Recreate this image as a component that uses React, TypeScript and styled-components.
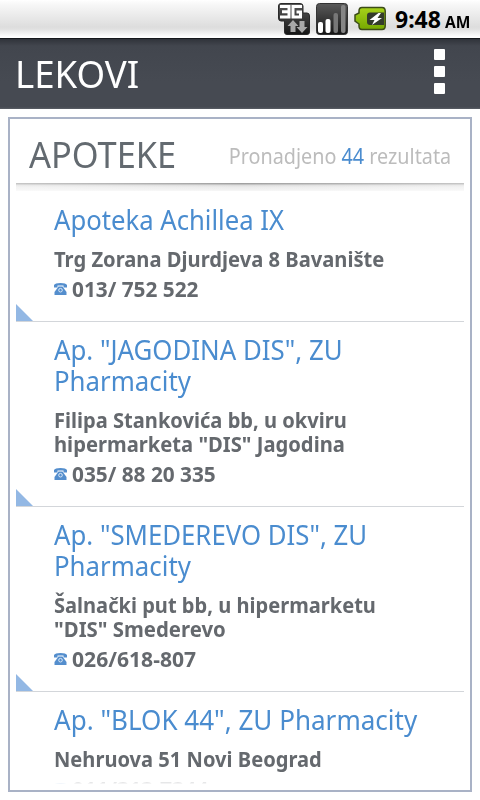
import React from "react";
import styled, { createGlobalStyle } from "styled-components";

const Global = createGlobalStyle`
  * { box-sizing: border-box; }
  body { margin: 0; background: #fff; font-family: "Noto Sans", sans-serif; }
`;
const Screen = styled.div`
  width: 480px; height: 800px; overflow: hidden;
  display: flex; flex-direction: column; background: #fff;
`;
const StatusBar = styled.div`
  height: 39px; flex: none; display: flex; align-items: flex-start; justify-content: flex-end;
  gap: 6px; padding: 3px 10px 0 0;
  background: linear-gradient(#ffffff 0, #f8f8f8 4px, #dddddd 27px, #e0e0e0 29px, #fbfbfb 36px, #ffffff 37px);
  border-bottom: 1px solid #15171b;
  svg { flex: none; display: block; }
`;
const Clock = styled.div`
  display: flex; align-items: baseline; gap: 4px; width: 75px; margin-left: 3px;
  font-weight: 700; color: #000; white-space: nowrap; line-height: 33px;
`;
const Header = styled.header`
  height: 70px; flex: none; display: flex; align-items: center; justify-content: space-between;
  padding: 0 35px 2px 15px; color: #fff;
  background: linear-gradient(#30333a 0, #42464e 7px, #464a52 60%, #464a52 68px, #5b5f66 70px);
`;
const MenuButton = styled.button`
  border: 0; padding: 0; background: none; display: flex; flex-direction: column; gap: 6px;
  margin-bottom: 4px;
`;
const Dot = styled.span`width: 11px; height: 11px; background: #fff; border-radius: 1px;`;
const Panel = styled.main`
  height: 675px; flex: none; margin: 8px 8px 0; padding: 0 6px 6px;
  border: 2px solid #a9b2c6; display: flex; flex-direction: column;
`;
const PanelHead = styled.div`
  height: 64px; flex: none; display: flex; justify-content: space-between; align-items: flex-start;
  padding: 0 13px;
`;
const Divider = styled.div`
  height: 8px; flex: none;
  background: linear-gradient(90deg, rgba(255,255,255,.4), transparent 50%, rgba(255,255,255,.4)),
    linear-gradient(#999 0, #a8a8a8 1px, #dadada 2px, #ebebeb 4px, #f2f2f2 7px, #f8f8f8 8px);
`;
const List = styled.div`
  flex: 1; min-height: 0; overflow: hidden; padding-top: 1px;
  mask-image: linear-gradient(#000 calc(100% - 9px), rgba(0,0,0,.16) calc(100% - 6px), rgba(0,0,0,.16) calc(100% - 1px), transparent 100%);
`;
const Card = styled.article`
  position: relative; padding: 12px 0 20px 38px; border-bottom: 1px solid #d3d6da;
`;
const Corner = styled.i`
  position: absolute; left: 0; bottom: 0; width: 17px; height: 17px;
  background: #93b8e4; clip-path: polygon(0 0, 100% 100%, 0 100%);
`;
const Name = styled.h2`margin: 0; font-size: 28px; font-weight: 400; line-height: 31px; color: #4a8ccf;`;
const Address = styled.p`margin: 12px 0 0; font-size: 21px; font-weight: 700; line-height: 24px; color: #65696e;`;
const Phone = styled.div`
  display: flex; align-items: center; gap: 5px; margin-top: 6px; height: 24px;
  font-size: 21px; font-weight: 700; line-height: 24px; color: #65696e;
  svg { flex: none; }
`;
// Condensed line of text: keeps the glyph height while narrowing the advance.
const Line = styled.span<{ $x?: number; $size?: number; $color?: string; $block?: boolean; $right?: boolean; $lh?: number }>`
  display: ${p => (p.$block ? "block" : "inline-block")};
  white-space: nowrap;
  transform: scaleX(${p => p.$x ?? 1});
  transform-origin: ${p => (p.$right ? "right" : "left")} center;
  ${p => p.$size ? `font-size: ${p.$size}px;` : ""}
  ${p => p.$color ? `color: ${p.$color};` : ""}
  ${p => p.$lh ? `line-height: ${p.$lh}px;` : ""}
`;
const Count = styled.span`color: #4a8ccf;`;

const Network = () => (
  <svg width="32" height="32" viewBox="0 0 32 32">
    <defs><linearGradient id="dark" x2="0" y2="1"><stop stopColor="#5a5a5a" /><stop offset="1" stopColor="#151515" /></linearGradient></defs>
    <path d="M3 .5H22Q25 .5 25 3V10H29Q31.500 10 31.500 13V29Q31.500 31.500 29 31.500H9Q6.500 31.500 6.500 29V18H3Q.5 18 .5 15V3Q.5 .5 3 .5Z" fill="url(#dark)" stroke="#2a2a2a" />
    <path d="M2 3.500H11V14H2M4 8.700H11M24 3.500H15V14H22.500V9H18.500" fill="none" stroke="#fff" strokeWidth="3" />
    <path d="M15 17L20.500 23H17.500V29H12.500V23H9.500ZM24 30L18.500 24H21.500V18H26.500V24H29.500Z" fill="#a8a8a8" />
  </svg>
);
const Signal = () => (
  <svg width="32" height="32" viewBox="0 0 32 32">
    <rect x=".5" y=".5" width="31" height="31" rx="3" fill="url(#dark)" stroke="#333" />
    <rect x="2" y="19" width="5" height="11" rx="2" fill="#fff" />
    <rect x="9.500" y="16" width="5" height="14" rx="2" fill="#fff" />
    <rect x="17.500" y="10" width="4.500" height="20" rx="2" fill="#777" />
    <rect x="25" y="2" width="4.500" height="28" rx="2" fill="#858585" />
  </svg>
);
const Battery = () => (
  <svg width="32" height="32" viewBox="0 0 32 32">
    <defs><linearGradient id="green" x2="0" y2="1"><stop stopColor="#a7d21b" /><stop offset="1" stopColor="#76a900" /></linearGradient></defs>
    <path d="M8 4.500H28Q31.200 4.500 31.200 8V23Q31.200 26.500 28 26.500H8Q5 26.500 5 23V21L1 18V12L5 10V8Q5 4.500 8 4.500Z" fill="url(#green)" stroke="#3c4c18" strokeWidth="1.500" />
    <path d="M16 9.500H30V22H16Q13 22 13 19V12.500Q13 9.500 16 9.500Z" fill="#343b2b" />
    <path d="M24.500 10L15.500 17H20.500L18 22L28 15H23.500L27 10Z" fill="#fff" />
  </svg>
);
const PhoneIcon = () => (
  <svg width="13" height="12" viewBox="0 0 13 12">
    <path d="M0 4.500V2Q1 0 6.500 0T13 2V4.500H9.500V2.500H3.500V4.500Z" fill="#548ecd" />
    <path d="M4.500 3.500H8.500L12.500 9V12H.5V9Z" fill="#548ecd" />
    <circle cx="6.500" cy="7.200" r="1.800" fill="none" stroke="#dce9f7" />
  </svg>
);

type Text = [string, number];
const pharmacies: { name: Text[]; address: Text[]; phone: Text }[] = [
  { name: [["Apoteka Achillea IX", .917]], address: [["Trg Zorana Djurdjeva 8 Bavanište", .96]], phone: ["013/ 752 522", .99] },
  { name: [["Ap. \"JAGODINA DIS\", ZU", .922], ["Pharmacity", .922]], address: [["Filipa Stankovića bb, u okviru", .957], ["hipermarketa \"DIS\" Jagodina", .961]], phone: ["035/ 88 20 335", .99] },
  { name: [["Ap. \"SMEDEREVO DIS\", ZU", .92], ["Pharmacity", .922]], address: [["Šalnački put bb, u hipermarketu", .956], ["\"DIS\" Smederevo", .969]], phone: ["026/618-807", 1.005] },
  { name: [["Ap. \"BLOK 44\", ZU Pharmacity", .93]], address: [["Nehruova 51 Novi Beograd", .957]], phone: ["011/313-7344", 1.005] },
];
const lines = (ls: Text[]) => ls.map(([t, x]) => <Line key={t} $block $x={x}>{t}</Line>);

export default function App() {
  return (
    <Screen>
      <Global />
      <StatusBar>
        <Network /><Signal /><Battery />
        <Clock><Line $size={23} $x={1}>9:48</Line><Line $size={16} $x={.97}>AM</Line></Clock>
      </StatusBar>
      <Header>
        <Line $size={38} $x={.965}>LEKOVI</Line>
        <MenuButton aria-label="Meni"><Dot /><Dot /><Dot /></MenuButton>
      </Header>
      <Panel>
        <PanelHead>
          <Line $size={36} $x={.955} $lh={72} $color="#636a70">APOTEKE</Line>
          <Line $size={21} $x={.942} $lh={75} $color="#bcbcbc" $right>Pronadjeno <Count>44</Count> rezultata</Line>
        </PanelHead>
        <Divider />
        <List>
          {pharmacies.map(p => (
            <Card key={p.phone[0]}>
              <Name>{lines(p.name)}</Name>
              <Address>{lines(p.address)}</Address>
              <Phone><PhoneIcon /><Line $x={p.phone[1]}>{p.phone[0]}</Line></Phone>
              <Corner />
            </Card>
          ))}
        </List>
      </Panel>
    </Screen>
  );
}
